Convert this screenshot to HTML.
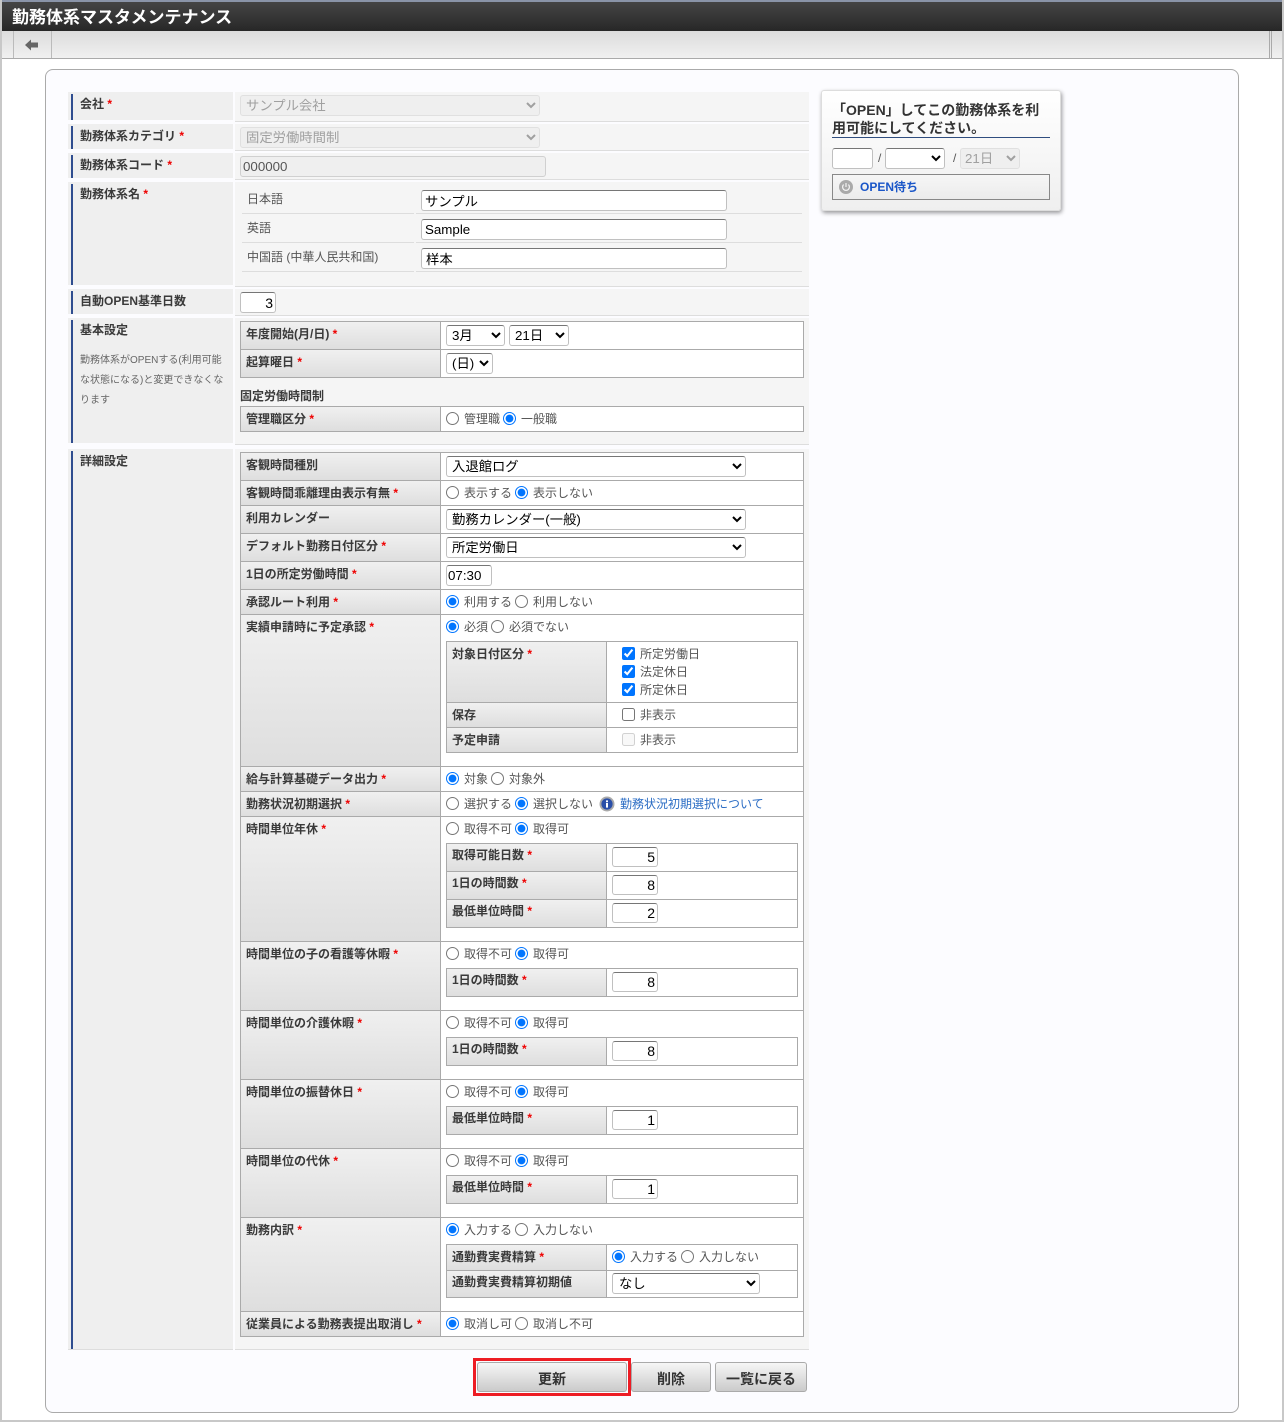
<!DOCTYPE html>
<html lang="ja"><head><meta charset="utf-8"><title>勤務体系マスタメンテナンス</title>
<style>
html,body{margin:0;padding:0;background:#fff}
body{position:relative;width:1284px;height:1422px;overflow:hidden;font-family:"Liberation Sans","Noto Sans CJK JP",sans-serif;font-size:12px;color:#444}
div,input,select,svg{position:absolute;box-sizing:border-box}
input,select{font-family:"Liberation Sans","Noto Sans CJK JP",sans-serif;font-size:13.333px;color:#000}
.lc{left:68px;width:165px;background:#efefef}
.lc:before{content:"";position:absolute;left:3px;top:2px;bottom:0;width:2px;background:#2f4d8f}
.rc{left:235px;width:574px;background:#f5f5f5;border-bottom:1px solid #ddd}
.t{white-space:nowrap;line-height:16px;height:16px}
.b{font-weight:bold;color:#3a3a3a}
i{font-style:normal;color:#e00;font-weight:bold}
.th{left:240px;width:201px;border:1px solid #aaa;background:linear-gradient(#f0f0f0,#dedede)}
.st{left:446px;width:161px;border:1px solid #aaa;background:linear-gradient(#f0f0f0,#dedede)}
.sb{left:606px;width:192px;border:1px solid #aaa;background:#fff}
.td{left:440px;width:364px;border:1px solid #aaa;background:#fff}
.f{display:flex;align-items:center;height:16px;white-space:nowrap;color:#555}
.f input{position:static;margin:0 5px 0 0;flex:none}
.f span{margin-right:3px}
.x{border:1px solid #c0c0c0;border-top-color:#767676;border-radius:3px;background:#fff;padding:1px 3px;height:21px;outline:0}
.n{left:612px;width:46px;height:20px;text-align:right;padding-right:2px;font-size:14px}
select.x{padding:0 0 0 1px;appearance:auto}
select.d{background:#efefef;border:1px solid #e0e0e0;color:#a0a0a0;opacity:1}
.btn{border:1px solid #aaa;border-radius:3px;background:linear-gradient(#f6f6f6,#cbcbcb);text-align:center;font-weight:bold;font-size:14px;color:#333;line-height:32px;height:30px;top:1362px}
</style></head><body>

<div style="left:0;top:0;width:1284px;height:1422px;border:2px solid #c8c8c8;border-top:0"></div>
<div style="left:2px;top:0;width:1280px;height:2px;background:#8a94a8"></div>
<div style="left:2px;top:2px;width:1280px;height:29px;background:linear-gradient(#454545,#272727)"></div>
<div class="t" style="left:12px;top:6px;font-size:17px;line-height:24px;height:24px;font-weight:bold;color:#fff">勤務体系マスタメンテナンス</div>
<div style="left:2px;top:31px;width:1280px;height:28px;background:linear-gradient(#dcdcdc,#f0f0f0);border-bottom:1px solid #aaa"></div>
<div style="left:13px;top:31px;width:1px;height:27px;background:#bbb"></div>
<div style="left:51px;top:31px;width:1px;height:27px;background:#bbb"></div>
<div style="left:1269px;top:31px;width:1px;height:27px;background:#aaa"></div>
<div style="left:1271px;top:31px;width:1px;height:27px;background:#aaa"></div>
<svg style="left:24px;top:38px" width="15" height="14" viewBox="0 0 15 14"><path d="M1 7 L7 1.5 V4.5 H14 V9.5 H7 V12.5 Z" fill="#666"/></svg>

<div style="left:45px;top:69px;width:1194px;height:1344px;border:1px solid #aaa;border-radius:8px;background:#fcfcff"></div>

<!-- top rows -->
<div class="lc" style="top:92px;height:28px"></div><div class="rc" style="top:92px;height:30px"></div>
<div class="lc" style="top:124px;height:25px"></div><div class="rc" style="top:124px;height:27px"></div>
<div class="lc" style="top:153px;height:25px"></div><div class="rc" style="top:153px;height:27px"></div>
<div class="lc" style="top:182px;height:103px"></div><div class="rc" style="top:182px;height:105px"></div>
<div class="lc" style="top:289px;height:25px"></div><div class="rc" style="top:289px;height:27px"></div>
<div class="lc" style="top:318px;height:125px"></div><div class="rc" style="top:318px;height:127px"></div>
<div class="lc" style="top:449px;height:900px"></div><div class="rc" style="top:449px;height:901px"></div>
<div style="left:68px;top:1349px;width:165px;height:1px;background:#ddd"></div>

<div class="t b" style="left:80px;top:96px">会社 <i>*</i></div>
<div class="t b" style="left:80px;top:128px">勤務体系カテゴリ <i>*</i></div>
<div class="t b" style="left:80px;top:157px">勤務体系コード <i>*</i></div>
<div class="t b" style="left:80px;top:186px">勤務体系名 <i>*</i></div>
<div class="t b" style="left:80px;top:293px">自動OPEN基準日数</div>
<div class="t b" style="left:80px;top:322px">基本設定</div>
<div class="t" style="left:80px;top:353px;font-size:10px;color:#666">勤務体系がOPENする(利用可能</div>
<div class="t" style="left:80px;top:373px;font-size:10px;color:#666">な状態になる)と変更できなくな</div>
<div class="t" style="left:80px;top:393px;font-size:10px;color:#666">ります</div>
<div class="t b" style="left:80px;top:453px">詳細設定</div>

<select class="x d" disabled style="left:240px;top:95px;width:300px"><option>サンプル会社</option></select>
<select class="x d" disabled style="left:240px;top:127px;width:300px"><option>固定労働時間制</option></select>
<input class="x" disabled value="000000" style="left:240px;top:156px;width:306px;background:#efefef;color:#555;border:1px solid #d0d0d0;padding-left:2px">

<div class="t" style="left:247px;top:191px;color:#555">日本語</div>
<div class="t" style="left:247px;top:220px;color:#555">英語</div>
<div class="t" style="left:247px;top:249px;color:#555">中国語 (中華人民共和国)</div>
<div style="left:242px;top:213px;width:172px;height:1px;background:#ddd"></div>
<div style="left:242px;top:242px;width:172px;height:1px;background:#ddd"></div>
<div style="left:242px;top:271px;width:172px;height:1px;background:#ddd"></div>
<div style="left:416px;top:213px;width:386px;height:1px;background:#ddd"></div>
<div style="left:416px;top:242px;width:386px;height:1px;background:#ddd"></div>
<div style="left:416px;top:271px;width:386px;height:1px;background:#ddd"></div>
<input class="x" value="サンプル" style="left:421px;top:190px;width:306px">
<input class="x" value="Sample" style="left:421px;top:219px;width:306px">
<input class="x" value="样本" style="left:421px;top:248px;width:306px;padding-left:4px">
<input class="x" value="3" style="left:240px;top:292px;width:36px;text-align:right;font-size:14px;padding-right:2px">

<!-- table 1 -->
<div class="th" style="top:321px;height:29px"></div><div class="td" style="top:321px;height:29px"></div>
<div class="th" style="top:349px;height:29px"></div><div class="td" style="top:349px;height:29px"></div>
<div class="t b" style="left:246px;top:326px">年度開始(月/日) <i>*</i></div>
<div class="t b" style="left:246px;top:354px">起算曜日 <i>*</i></div>
<select class="x" style="left:446px;top:325px;width:59px"><option>3月</option></select>
<select class="x" style="left:509px;top:325px;width:60px"><option>21日</option></select>
<select class="x" style="left:446px;top:353px;width:47px"><option>(日)</option></select>
<div class="t b" style="left:240px;top:388px">固定労働時間制</div>
<div class="th" style="top:406px;height:26px"></div><div class="td" style="top:406px;height:26px"></div>
<div class="t b" style="left:246px;top:411px">管理職区分 <i>*</i></div>
<div class="f" style="left:446px;top:410px"><input type="radio"><span>管理職</span><input type="radio" checked><span>一般職</span></div>

<!-- table 3 rows -->
<div class="th" style="top:452px;height:29px"></div><div class="td" style="top:452px;height:29px"></div>
<div class="th" style="top:480px;height:26px"></div><div class="td" style="top:480px;height:26px"></div>
<div class="th" style="top:505px;height:29px"></div><div class="td" style="top:505px;height:29px"></div>
<div class="th" style="top:533px;height:29px"></div><div class="td" style="top:533px;height:29px"></div>
<div class="th" style="top:561px;height:29px"></div><div class="td" style="top:561px;height:29px"></div>
<div class="th" style="top:589px;height:26px"></div><div class="td" style="top:589px;height:26px"></div>
<div class="th" style="top:614px;height:153px"></div><div class="td" style="top:614px;height:153px"></div>
<div class="th" style="top:766px;height:26px"></div><div class="td" style="top:766px;height:26px"></div>
<div class="th" style="top:791px;height:26px"></div><div class="td" style="top:791px;height:26px"></div>
<div class="th" style="top:816px;height:126px"></div><div class="td" style="top:816px;height:126px"></div>
<div class="th" style="top:941px;height:70px"></div><div class="td" style="top:941px;height:70px"></div>
<div class="th" style="top:1010px;height:70px"></div><div class="td" style="top:1010px;height:70px"></div>
<div class="th" style="top:1079px;height:70px"></div><div class="td" style="top:1079px;height:70px"></div>
<div class="th" style="top:1148px;height:70px"></div><div class="td" style="top:1148px;height:70px"></div>
<div class="th" style="top:1217px;height:95px"></div><div class="td" style="top:1217px;height:95px"></div>
<div class="th" style="top:1311px;height:26px"></div><div class="td" style="top:1311px;height:26px"></div>

<div class="t b" style="left:246px;top:457px">客観時間種別</div>
<div class="t b" style="left:246px;top:485px">客観時間乖離理由表示有無 <i>*</i></div>
<div class="t b" style="left:246px;top:510px">利用カレンダー</div>
<div class="t b" style="left:246px;top:538px">デフォルト勤務日付区分 <i>*</i></div>
<div class="t b" style="left:246px;top:566px">1日の所定労働時間 <i>*</i></div>
<div class="t b" style="left:246px;top:594px">承認ルート利用 <i>*</i></div>
<div class="t b" style="left:246px;top:619px">実績申請時に予定承認 <i>*</i></div>
<div class="t b" style="left:246px;top:771px">給与計算基礎データ出力 <i>*</i></div>
<div class="t b" style="left:246px;top:796px">勤務状況初期選択 <i>*</i></div>
<div class="t b" style="left:246px;top:821px">時間単位年休 <i>*</i></div>
<div class="t b" style="left:246px;top:946px">時間単位の子の看護等休暇 <i>*</i></div>
<div class="t b" style="left:246px;top:1015px">時間単位の介護休暇 <i>*</i></div>
<div class="t b" style="left:246px;top:1084px">時間単位の振替休日 <i>*</i></div>
<div class="t b" style="left:246px;top:1153px">時間単位の代休 <i>*</i></div>
<div class="t b" style="left:246px;top:1222px">勤務内訳 <i>*</i></div>
<div class="t b" style="left:246px;top:1316px">従業員による勤務表提出取消し <i>*</i></div>

<select class="x" style="left:446px;top:456px;width:300px"><option>入退館ログ</option></select>
<div class="f" style="left:446px;top:484px"><input type="radio"><span>表示する</span><input type="radio" checked><span>表示しない</span></div>
<select class="x" style="left:446px;top:509px;width:300px"><option>勤務カレンダー(一般)</option></select>
<select class="x" style="left:446px;top:537px;width:300px"><option>所定労働日</option></select>
<input class="x" value="07:30" style="left:446px;top:565px;width:46px;padding-left:1px">
<div class="f" style="left:446px;top:593px"><input type="radio" checked><span>利用する</span><input type="radio"><span>利用しない</span></div>
<div class="f" style="left:446px;top:618px"><input type="radio" checked><span>必須</span><input type="radio"><span>必須でない</span></div>

<div class="st" style="top:641px;height:62px"></div><div class="sb" style="top:641px;height:62px"></div>
<div class="st" style="top:702px;height:26px"></div><div class="sb" style="top:702px;height:26px"></div>
<div class="st" style="top:727px;height:26px"></div><div class="sb" style="top:727px;height:26px"></div>
<div class="t b" style="left:452px;top:646px">対象日付区分 <i>*</i></div>
<div class="t b" style="left:452px;top:707px">保存</div>
<div class="t b" style="left:452px;top:732px">予定申請</div>
<div class="f" style="left:622px;top:645px"><input type="checkbox" checked><span>所定労働日</span></div>
<div class="f" style="left:622px;top:663px"><input type="checkbox" checked><span>法定休日</span></div>
<div class="f" style="left:622px;top:681px"><input type="checkbox" checked><span>所定休日</span></div>
<div class="f" style="left:622px;top:706px"><input type="checkbox"><span>非表示</span></div>
<div class="f" style="left:622px;top:731px"><input type="checkbox" disabled><span>非表示</span></div>

<div class="f" style="left:446px;top:770px"><input type="radio" checked><span>対象</span><input type="radio"><span>対象外</span></div>
<div class="f" style="left:446px;top:795px"><input type="radio"><span>選択する</span><input type="radio" checked><span>選択しない</span></div>
<svg style="left:599px;top:796px" width="16" height="16" viewBox="0 0 16 16"><circle cx="8" cy="8" r="7.5" fill="#aaa"/><circle cx="8" cy="8" r="5.6" fill="#2a4fa8"/><rect x="7" y="7" width="2" height="4.6" fill="#fff"/><rect x="7" y="4.4" width="2" height="1.8" fill="#fff"/></svg>
<div class="t" style="left:620px;top:796px;color:#2a6cc4">勤務状況初期選択について</div>

<div class="f" style="left:446px;top:820px"><input type="radio"><span>取得不可</span><input type="radio" checked><span>取得可</span></div>
<div class="st" style="top:843px;height:29px"></div><div class="sb" style="top:843px;height:29px"></div>
<div class="st" style="top:871px;height:29px"></div><div class="sb" style="top:871px;height:29px"></div>
<div class="st" style="top:899px;height:29px"></div><div class="sb" style="top:899px;height:29px"></div>
<div class="t b" style="left:452px;top:847px">取得可能日数 <i>*</i></div>
<div class="t b" style="left:452px;top:875px">1日の時間数 <i>*</i></div>
<div class="t b" style="left:452px;top:903px">最低単位時間 <i>*</i></div>
<input class="x n" value="5" style="top:847px"><input class="x n" value="8" style="top:875px"><input class="x n" value="2" style="top:903px">

<div class="f" style="left:446px;top:945px"><input type="radio"><span>取得不可</span><input type="radio" checked><span>取得可</span></div>
<div class="st" style="top:968px;height:29px"></div><div class="sb" style="top:968px;height:29px"></div>
<div class="t b" style="left:452px;top:972px">1日の時間数 <i>*</i></div>
<input class="x n" value="8" style="top:972px">

<div class="f" style="left:446px;top:1014px"><input type="radio"><span>取得不可</span><input type="radio" checked><span>取得可</span></div>
<div class="st" style="top:1037px;height:29px"></div><div class="sb" style="top:1037px;height:29px"></div>
<div class="t b" style="left:452px;top:1041px">1日の時間数 <i>*</i></div>
<input class="x n" value="8" style="top:1041px">

<div class="f" style="left:446px;top:1083px"><input type="radio"><span>取得不可</span><input type="radio" checked><span>取得可</span></div>
<div class="st" style="top:1106px;height:29px"></div><div class="sb" style="top:1106px;height:29px"></div>
<div class="t b" style="left:452px;top:1110px">最低単位時間 <i>*</i></div>
<input class="x n" value="1" style="top:1110px">

<div class="f" style="left:446px;top:1152px"><input type="radio"><span>取得不可</span><input type="radio" checked><span>取得可</span></div>
<div class="st" style="top:1175px;height:29px"></div><div class="sb" style="top:1175px;height:29px"></div>
<div class="t b" style="left:452px;top:1179px">最低単位時間 <i>*</i></div>
<input class="x n" value="1" style="top:1179px">

<div class="f" style="left:446px;top:1221px"><input type="radio" checked><span>入力する</span><input type="radio"><span>入力しない</span></div>
<div class="st" style="top:1244px;height:27px"></div><div class="sb" style="top:1244px;height:27px"></div>
<div class="st" style="top:1270px;height:28px"></div><div class="sb" style="top:1270px;height:28px"></div>
<div class="t b" style="left:452px;top:1249px">通勤費実費精算 <i>*</i></div>
<div class="t b" style="left:452px;top:1274px">通勤費実費精算初期値</div>
<div class="f" style="left:612px;top:1248px"><input type="radio" checked><span>入力する</span><input type="radio"><span>入力しない</span></div>
<select class="x" style="left:612px;top:1273px;width:148px;padding-left:2px"><option>なし</option></select>

<div class="f" style="left:446px;top:1315px"><input type="radio" checked><span>取消し可</span><input type="radio"><span>取消し不可</span></div>

<!-- buttons -->
<div style="left:473px;top:1358px;width:158px;height:38px;border:3px solid #ed1c24"></div>
<div class="btn" style="left:477px;width:150px">更新</div>
<div class="btn" style="left:631px;width:80px">削除</div>
<div class="btn" style="left:715px;width:92px">一覧に戻る</div>

<!-- side card -->
<div style="left:821px;top:90px;width:240px;height:121px;border:1px solid #ddd;border-radius:3px;background:linear-gradient(#fff,#efefef);box-shadow:1px 2px 4px rgba(0,0,0,.4)"></div>
<div class="t" style="left:832px;top:101px;font-size:14px;font-weight:bold;line-height:18px;height:18px;color:#333">「OPEN」してこの勤務体系を利</div>
<div class="t" style="left:832px;top:119px;font-size:14px;font-weight:bold;line-height:18px;height:18px;color:#333">用可能にしてください。</div>
<div style="left:832px;top:137px;width:218px;height:1px;background:#2f4d7f"></div>
<input class="x" style="left:832px;top:148px;width:41px">
<div class="t" style="left:878px;top:150px;color:#555">/</div>
<select class="x" style="left:885px;top:148px;width:60px"><option></option></select>
<div class="t" style="left:953px;top:150px;color:#555">/</div>
<select class="x d" disabled style="left:960px;top:148px;width:60px;padding-left:0"><option>21日</option></select>
<div style="left:832px;top:174px;width:218px;height:26px;border:1px solid #888;background:linear-gradient(#f6f6f6,#ececec)"></div>
<svg style="left:839px;top:180px" width="14" height="14" viewBox="0 0 14 14"><circle cx="7" cy="7" r="7" fill="#aaa"/><path d="M4.6 4.6 A3.4 3.4 0 1 0 9.4 4.6" fill="none" stroke="#f4f4f4" stroke-width="1.2"/><path d="M7 3 V7" stroke="#f4f4f4" stroke-width="1.2"/></svg>
<div class="t" style="left:860px;top:179px;font-weight:bold;color:#1a56c8">OPEN待ち</div>
</body></html>
